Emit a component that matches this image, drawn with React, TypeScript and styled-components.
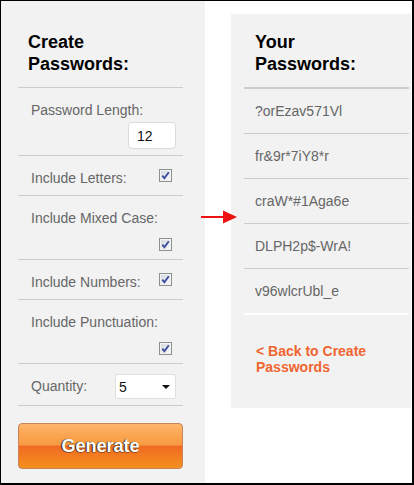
import React from "react";
import styled, { createGlobalStyle } from "styled-components";

const GlobalStyle = createGlobalStyle`
  html, body { margin: 0; padding: 0; background: #fff; }
  body { font-family: "Liberation Sans", Arial, sans-serif; }
  * { box-sizing: border-box; }
`;

const Frame = styled.div`
  position: relative;
  width: 414px;
  height: 485px;
  border: 1px solid #000;
  border-right-width: 2px;
  border-bottom-width: 2px;
  background: #fff;
  display: flex;
  align-items: flex-start;
  gap: 26px;
  overflow: hidden;
`;

const CreatePanel = styled.section`
  width: 204px;
  flex: none;
  align-self: stretch;
  background: #f2f2f2;
  padding: 30px 22px 0 17px;
`;

const ResultPanel = styled.section`
  width: 180px;
  flex: none;
  margin-top: 13px;
  background: #f2f2f2;
  padding: 17px 2px 33px 13px;
`;

const Heading = styled.h2<{ $thick?: boolean }>`
  margin: 0;
  padding: 0 0 12px ${(p) => (p.$thick ? "11px" : "10px")};
  font-size: 18px;
  line-height: 22px;
  font-weight: bold;
  color: #000;
  border-bottom: ${(p) => (p.$thick ? "2px" : "1px")} solid #ccc;
`;

const Field = styled.div<{ $stacked?: boolean }>`
  display: flex;
  flex-direction: ${(p) => (p.$stacked ? "column" : "row")};
  align-items: flex-start;
  justify-content: space-between;
  padding: 13px 7px 8px 13px;
  border-bottom: 1px solid #ccc;
`;

const Label = styled.span`
  font-size: 14px;
  line-height: 18px;
  color: #666;
  align-self: flex-start;
`;

const LengthInput = styled.input`
  align-self: flex-end;
  width: 48px;
  height: 27px;
  margin: 3px 0 -2px;
  padding: 0 0 0 8px;
  border: 1px solid #dadada;
  border-radius: 4px;
  background: #fff;
  font-family: "Liberation Sans", Arial, sans-serif;
  font-size: 14px;
  color: #111;
  outline: none;
`;

const CheckBox = styled.span<{ $stacked?: boolean }>`
  display: flex;
  align-items: center;
  justify-content: center;
  align-self: ${(p) => (p.$stacked ? "flex-end" : "flex-start")};
  width: 13px;
  height: 13px;
  margin: ${(p) => (p.$stacked ? "11px 4px 0 0" : "0 4px 0 0")};
  border: 1px solid #8e8f8f;
  background: linear-gradient(135deg, #d4d6da 0%, #eceef0 60%, #f8f8f8 100%);
  box-shadow: inset 0 0 0 1px #f3f3f3;
`;

const SelectBox = styled.div`
  display: flex;
  align-items: center;
  justify-content: space-between;
  width: 61px;
  height: 25px;
  margin: -3px 0 -2px;
  padding: 0 5px 0 3px;
  border: 1px solid #e0e0e0;
  border-radius: 2px;
  background: #fff;
  font-size: 14px;
  color: #111;
`;

const GenerateButton = styled.button`
  display: block;
  width: 165px;
  height: 46px;
  margin-top: 17px;
  padding: 0;
  border: 1px solid #c8845a;
  border-radius: 4px;
  background: linear-gradient(
    to bottom,
    #ffb66c 0%,
    #fba552 25%,
    #f89a42 48%,
    #f06a22 50%,
    #f27d20 75%,
    #f5901f 100%
  );
  font-family: "Liberation Sans", Arial, sans-serif;
  font-size: 18px;
  font-weight: bold;
  color: #fff;
  text-shadow: -1px 0 1px rgba(0, 0, 0, 0.75), 0 1px 0 rgba(60, 20, 0, 0.35);
  cursor: pointer;
`;

const PasswordList = styled.ul`
  list-style: none;
  margin: 0;
  padding: 0;
  border-bottom: 2px solid #fff;
`;

const PasswordItem = styled.li`
  padding: 13px 11px;
  font-size: 14px;
  line-height: 18px;
  color: #666;
  & + & {
    border-top: 1px solid #ccc;
  }
`;

const BackLink = styled.a`
  display: block;
  margin-top: 28px;
  padding-left: 12px;
  font-size: 14px;
  line-height: 16px;
  font-weight: bold;
  color: #f0652f;
  text-decoration: none;
`;

const Arrow = styled.svg`
  position: absolute;
  left: 200px;
  top: 209px;
`;

const Check = ({ stacked }: { stacked?: boolean }) => (
  <CheckBox $stacked={stacked} role="checkbox" aria-checked="true">
    <svg width="9" height="9" viewBox="0 0 9 9">
      <path d="M1.3 4.6 L3.4 7.2 L7.8 1.2" fill="none" stroke="#3b4f9e" strokeWidth="1.9" />
    </svg>
  </CheckBox>
);

const passwords = ["?orEzav571Vl", "fr&9r*7iY8*r", "craW*#1Aga6e", "DLPH2p$-WrA!", "v96wlcrUbl_e"];

export default function App() {
  return (
    <>
      <GlobalStyle />
      <Frame>
        <CreatePanel>
          <Heading>
            Create
            <br />
            Passwords:
          </Heading>
          <Field $stacked>
            <Label>Password Length:</Label>
            <LengthInput value="12" readOnly />
          </Field>
          <Field>
            <Label>Include Letters:</Label>
            <Check />
          </Field>
          <Field $stacked>
            <Label>Include Mixed Case:</Label>
            <Check stacked />
          </Field>
          <Field>
            <Label>Include Numbers:</Label>
            <Check />
          </Field>
          <Field $stacked>
            <Label>Include Punctuation:</Label>
            <Check stacked />
          </Field>
          <Field>
            <Label>Quantity:</Label>
            <SelectBox role="combobox">
              <span>5</span>
              <svg width="8" height="4" viewBox="0 0 8 4">
                <path d="M0 0 H8 L4 4 Z" fill="#111" />
              </svg>
            </SelectBox>
          </Field>
          <GenerateButton>Generate</GenerateButton>
        </CreatePanel>
        <ResultPanel>
          <Heading $thick>
            Your
            <br />
            Passwords:
          </Heading>
          <PasswordList>
            {passwords.map((p) => (
              <PasswordItem key={p}>{p}</PasswordItem>
            ))}
          </PasswordList>
          <BackLink href="#">
            &lt; Back to Create
            <br />
            Passwords
          </BackLink>
        </ResultPanel>
        <Arrow width="37" height="15" viewBox="0 0 37 15">
          <rect x="0" y="6" width="24" height="2" fill="#ee1111" />
          <path d="M22 0.5 L36 7 L22 13.5 Z" fill="#ee1111" />
        </Arrow>
      </Frame>
    </>
  );
}
